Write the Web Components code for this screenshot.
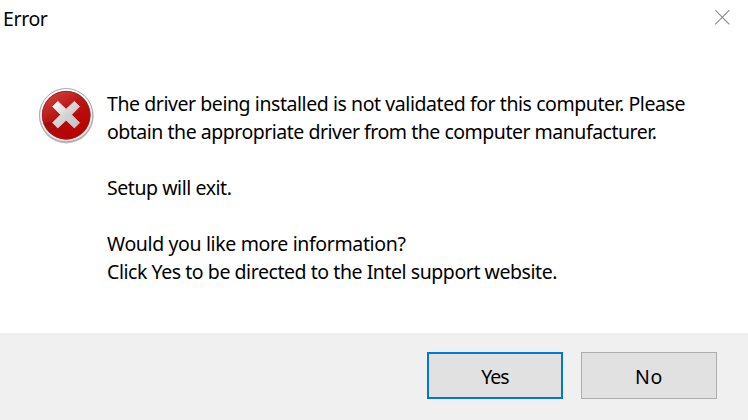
<!DOCTYPE html>
<html lang="en">
<head>
<meta charset="utf-8">
<title>Error</title>
<style>
html,body{margin:0;height:100%;overflow:hidden;background:#fff}
body{font-family:"Noto Sans","Open Sans",sans-serif;color:#000}
</style>
</head>
<body>
<error-dialog>
  <title-bar slot="title"><text-line width="44.5">Error</text-line></title-bar>
  <message-body slot="message">
    <text-line width="578">The driver being installed is not validated for this computer. Please</text-line>
    <text-line width="549.5">obtain the appropriate driver from the computer manufacturer.</text-line>
    <text-line></text-line>
    <text-line width="124.5">Setup will exit.</text-line>
    <text-line></text-line>
    <text-line width="298.5">Would you like more information?</text-line>
    <text-line width="450">Click Yes to be directed to the Intel support website.</text-line>
  </message-body>
  <dialog-button slot="actions" primary><text-line width="27.5">Yes</text-line></dialog-button>
  <dialog-button slot="actions"><text-line width="28">No</text-line></dialog-button>
</error-dialog>
<script>
const define = (name, html, ready) => customElements.define(name, class extends HTMLElement {
  constructor() {
    super();
    this.attachShadow({mode: 'open'}).innerHTML = html;
  }
  connectedCallback() { if (ready) ready(this); }
});

define('error-dialog', `<style>
:host{display:grid;grid-template-rows:333px 87px;width:748px;height:420px;background:#fff}
main{display:flex;flex-direction:column}
footer{background:#f0f0f0;display:flex;justify-content:flex-end;align-items:flex-start;gap:18px;padding:19px 31px 0 0}
</style><main><slot name="title"></slot><slot name="message"></slot></main><footer><slot name="actions"></slot></footer>`);

define('title-bar', `<style>
:host{display:flex;justify-content:space-between;height:40px;box-sizing:border-box;padding:5px 17px 0 3px;font-size:19.5px}
svg{display:block;margin-top:4px}
</style><slot></slot><svg width="17" height="17" viewBox="0 0 17 17"><path d="M1.2 1.2 15.4 15.4M15.4 1.2 1.2 15.4" stroke="#8c8c8c" stroke-width="1.1" fill="none"/></svg>`);

define('message-body', `<style>
:host{display:flex;gap:11px;padding:45px 0 0 36px;font-size:19.5px}
div{padding-top:5px}
</style><error-icon></error-icon><div><slot></slot></div>`);

define('error-icon', `<style>:host{display:block;width:60px;height:60px}svg{display:block}</style>
<svg width="60" height="60" viewBox="0 0 60 60">
<defs>
<linearGradient id="rim" x1="0" y1="0" x2="0" y2="1"><stop offset="0" stop-color="#fff"/><stop offset="1" stop-color="#e2e2e2"/></linearGradient>
<linearGradient id="red" x1="0" y1="0" x2=".6" y2="1"><stop offset="0" stop-color="#d64a43"/><stop offset=".5" stop-color="#b91614"/><stop offset="1" stop-color="#b80000"/></linearGradient>
<linearGradient id="shade" x1="0" y1="0" x2="1" y2=".5"><stop offset="0" stop-color="#700" stop-opacity=".65"/><stop offset="1" stop-color="#c00" stop-opacity=".1"/></linearGradient>
<linearGradient id="cross" x1="0" y1="0" x2="1" y2="1"><stop offset="0" stop-color="#fff"/><stop offset=".5" stop-color="#d3d3d3"/><stop offset="1" stop-color="#c2c2c2"/></linearGradient>
<clipPath id="disc"><circle cx="30.2" cy="30.2" r="24"/></clipPath>
</defs>
<circle cx="30.4" cy="31.2" r="27.2" fill="#777" opacity=".5"/>
<circle cx="30.2" cy="30.2" r="26.7" fill="url(#rim)" stroke="#a9a9a9" stroke-width="1"/>
<circle cx="30.2" cy="30.2" r="24.2" fill="url(#red)"/>
<path clip-path="url(#disc)" d="M4 38C15 38 42 31 55 20V56H4Z" fill="url(#shade)"/>
<circle cx="30.2" cy="30.2" r="23.9" fill="none" stroke="#9b2020" stroke-width=".8"/>
<path d="M21.8 16.4 30.1 24.2 38.4 16.4 43.6 21.6 35.6 29.7 43.6 37.8 38.4 43 30.1 35.2 21.8 43 16.6 37.8 24.6 29.7 16.6 21.6Z" fill="url(#cross)" stroke="url(#cross)" stroke-width=".8" stroke-linejoin="round"/>
</svg>`);

define('dialog-button', `<style>
:host{display:flex;box-sizing:border-box;width:136px;height:47px;border:1px solid #adadad;background:#e1e1e1;justify-content:center;align-items:center;font-size:19.5px;padding-top:3px}
:host([primary]){border:2px solid #0078d7}
</style><slot></slot>`);

define('text-line', `<style>:host{display:block;height:28px;line-height:28px;white-space:pre}span{display:inline-block}</style><span><slot></slot></span>`, el => {
  // Spread the letters so that the line takes its nominal width.
  const want = +el.getAttribute('width');
  if (!want) return;
  const span = el.shadowRoot.querySelector('span');
  const n = el.textContent.length;
  span.style.letterSpacing = (want - span.getBoundingClientRect().width) / n + 'px';
});
</script>
</body>
</html>
